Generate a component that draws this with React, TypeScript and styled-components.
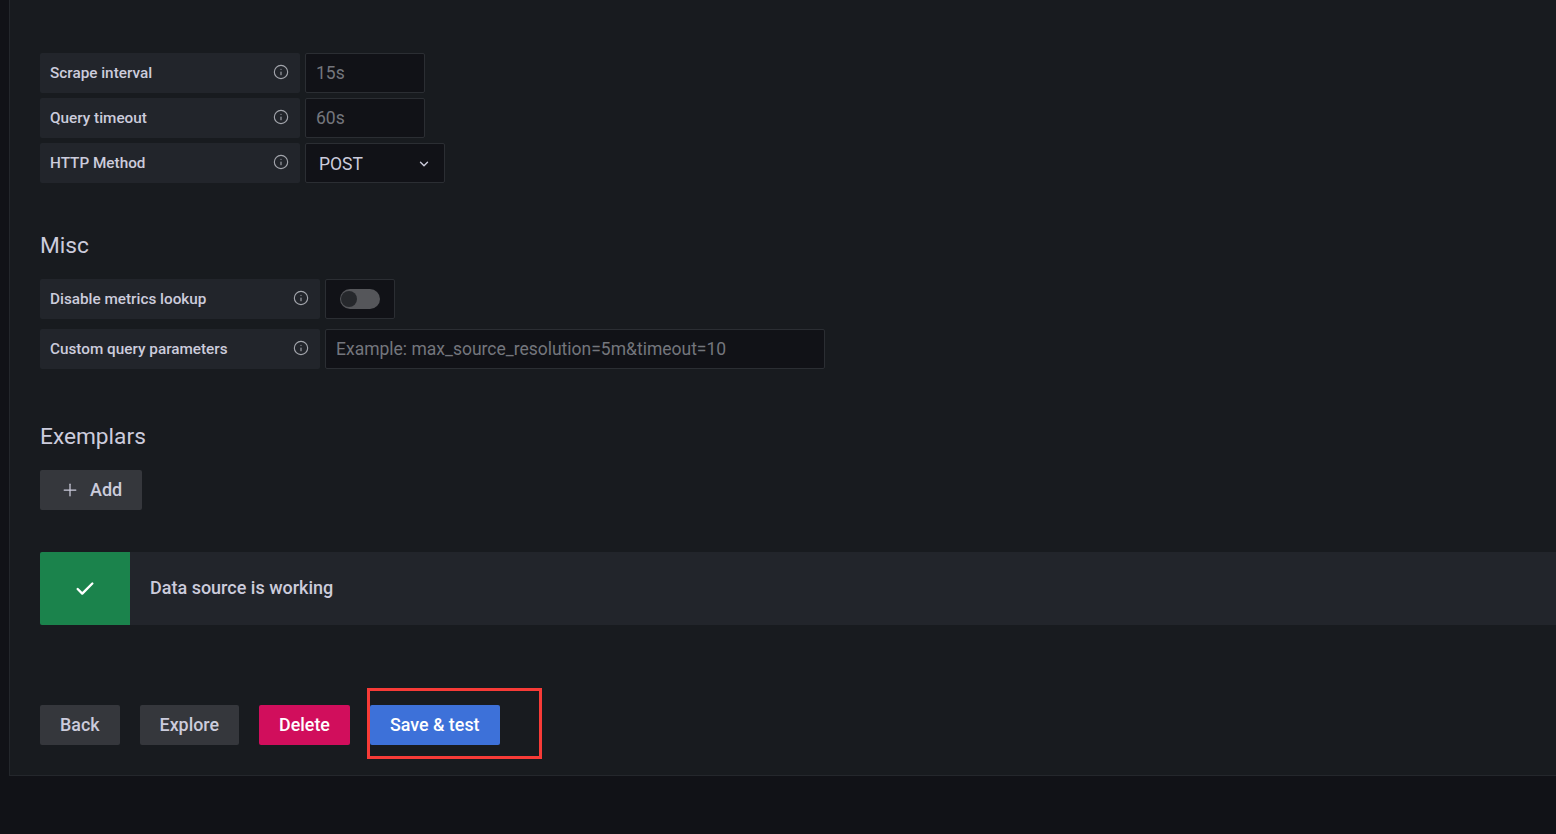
import React from "react";
import styled, { createGlobalStyle } from "styled-components";
import { Check, ChevronDown, Info, Plus } from "lucide-react";

const GlobalStyle = createGlobalStyle`
  html, body {
    margin: 0;
    height: 100%;
    overflow: hidden;
    background: #111217;
    color: #ccccdc;
    font-family: Roboto, "Liberation Sans", sans-serif;
  }
`;

const Page = styled.div`
  position: relative;
  width: 1556px;
  height: 834px;
  padding-left: 9px;
  box-sizing: border-box;
`;

const Panel = styled.main`
  box-sizing: border-box;
  height: 776px;
  padding: 53px 0 0 30px;
  background: #181b1f;
  border-left: 1px solid #24272c;
  border-bottom: 1px solid #24272c;
  display: flex;
  flex-direction: column;
`;

const Rows = styled.div<{ $gap: number; $top?: number }>`
  display: flex;
  flex-direction: column;
  gap: ${(p) => p.$gap}px;
  margin-top: ${(p) => p.$top ?? 0}px;
`;

const Row = styled.div`
  display: flex;
  gap: 5px;
  height: 40px;
`;

const Label = styled.div<{ $width: number }>`
  box-sizing: border-box;
  width: ${(p) => p.$width}px;
  padding: 0 11px 1px 10px;
  display: flex;
  align-items: center;
  justify-content: space-between;
  background: #22252b;
  border-radius: 2px;
  font-size: 15.3px;
  font-weight: 500;
  color: #ccccdc;
`;

const InfoIcon = styled(Info)`
  width: 16px;
  height: 16px;
  margin-bottom: 1px;
  color: #a3a5ac;
  stroke-width: 1.7;
`;

const Input = styled.input<{ $width: number }>`
  box-sizing: border-box;
  width: ${(p) => p.$width}px;
  height: 40px;
  padding: 0 10px;
  background: #111217;
  border: 1px solid #2b2e33;
  border-radius: 2px;
  outline: none;
  font: 400 17.5px Roboto, "Liberation Sans", sans-serif;
  color: #ccccdc;
  &::placeholder {
    color: #74767d;
    opacity: 1;
  }
`;

const Select = styled.div`
  box-sizing: border-box;
  width: 140px;
  height: 40px;
  padding: 1px 13px 0 13px;
  display: flex;
  align-items: center;
  justify-content: space-between;
  background: #111217;
  border: 1px solid #2b2e33;
  border-radius: 2px;
  font-size: 17.5px;
  color: #ccccdc;
  svg {
    width: 14px;
    height: 14px;
    stroke-width: 2.4;
  }
`;

const SwitchBox = styled.div`
  box-sizing: border-box;
  width: 70px;
  height: 40px;
  display: flex;
  align-items: center;
  justify-content: center;
  background: #111217;
  border: 1px solid #2b2e33;
  border-radius: 2px;
`;

const SwitchTrack = styled.div`
  width: 40px;
  height: 20px;
  border-radius: 10px;
  background: #55565a;
  position: relative;
`;

const SwitchKnob = styled.div`
  position: absolute;
  top: 2px;
  left: 1px;
  width: 16px;
  height: 16px;
  border-radius: 50%;
  background: #26282c;
`;

const Heading = styled.h3<{ $top: number }>`
  margin: ${(p) => p.$top}px 0 0;
  height: 24px;
  padding-top: 1px;
  box-sizing: border-box;
  line-height: 24px;
  font-size: 22.7px;
  font-weight: 400;
  color: #ccccdc;
`;

const Button = styled.button<{ $variant?: "secondary" | "danger" | "primary" }>`
  box-sizing: border-box;
  height: 40px;
  padding: 0 20px 1px;
  display: inline-flex;
  align-items: center;
  border: none;
  border-radius: 2px;
  font: 500 17.88px Roboto, "Liberation Sans", sans-serif;
  color: ${(p) => (p.$variant === "secondary" || !p.$variant ? "#ccccdc" : "#ffffff")};
  background: ${(p) =>
    p.$variant === "danger" ? "#d10e5c" : p.$variant === "primary" ? "#3d71d9" : "#35373c"};
`;

const AddButton = styled(Button)`
  align-self: flex-start;
  margin-top: 22px;
  gap: 10px;
  font-size: 18px;
  svg {
    width: 20px;
    height: 20px;
    stroke-width: 1.5;
  }
`;

const Alert = styled.div`
  margin-top: 42px;
  height: 73px;
  display: flex;
  align-items: center;
  background: #22252b;
  border-radius: 2px 0 0 2px;
  font-size: 18px;
  font-weight: 500;
`;

const AlertText = styled.span`
  margin-top: -2px;
`;

const AlertIcon = styled.div`
  width: 90px;
  height: 100%;
  margin-right: 20px;
  display: flex;
  align-items: center;
  justify-content: center;
  background: #1b834c;
  border-radius: 2px 0 0 2px;
  color: #fff;
  svg {
    width: 22px;
    height: 22px;
    stroke-width: 2.6;
  }
`;

const Actions = styled.div`
  margin-top: 80px;
  display: flex;
  gap: 20px;
`;

const Callout = styled.div`
  position: absolute;
  left: 367px;
  top: 688px;
  width: 175px;
  height: 71px;
  box-sizing: border-box;
  border: 3px solid #f73b37;
  pointer-events: none;
`;

export default function App() {
  return (
    <Page>
      <GlobalStyle />
      <Panel>
        <Rows $gap={5}>
          <Row>
            <Label $width={260}>
              Scrape interval
              <InfoIcon />
            </Label>
            <Input $width={120} placeholder="15s" readOnly />
          </Row>
          <Row>
            <Label $width={260}>
              Query timeout
              <InfoIcon />
            </Label>
            <Input $width={120} placeholder="60s" readOnly />
          </Row>
          <Row>
            <Label $width={260}>
              HTTP Method
              <InfoIcon />
            </Label>
            <Select>
              POST
              <ChevronDown />
            </Select>
          </Row>
        </Rows>

        <Heading $top={50}>Misc</Heading>
        <Rows $gap={10} $top={22}>
          <Row>
            <Label $width={280}>
              Disable metrics lookup
              <InfoIcon />
            </Label>
            <SwitchBox>
              <SwitchTrack>
                <SwitchKnob />
              </SwitchTrack>
            </SwitchBox>
          </Row>
          <Row>
            <Label $width={280}>
              Custom query parameters
              <InfoIcon />
            </Label>
            <Input
              $width={500}
              placeholder="Example: max_source_resolution=5m&timeout=10"
              readOnly
            />
          </Row>
        </Rows>

        <Heading $top={55}>Exemplars</Heading>
        <AddButton>
          <Plus />
          Add
        </AddButton>

        <Alert>
          <AlertIcon>
            <Check />
          </AlertIcon>
          <AlertText>Data source is working</AlertText>
        </Alert>

        <Actions>
          <Button>Back</Button>
          <Button>Explore</Button>
          <Button $variant="danger">Delete</Button>
          <Button $variant="primary">Save &amp; test</Button>
        </Actions>
      </Panel>
      <Callout />
    </Page>
  );
}
